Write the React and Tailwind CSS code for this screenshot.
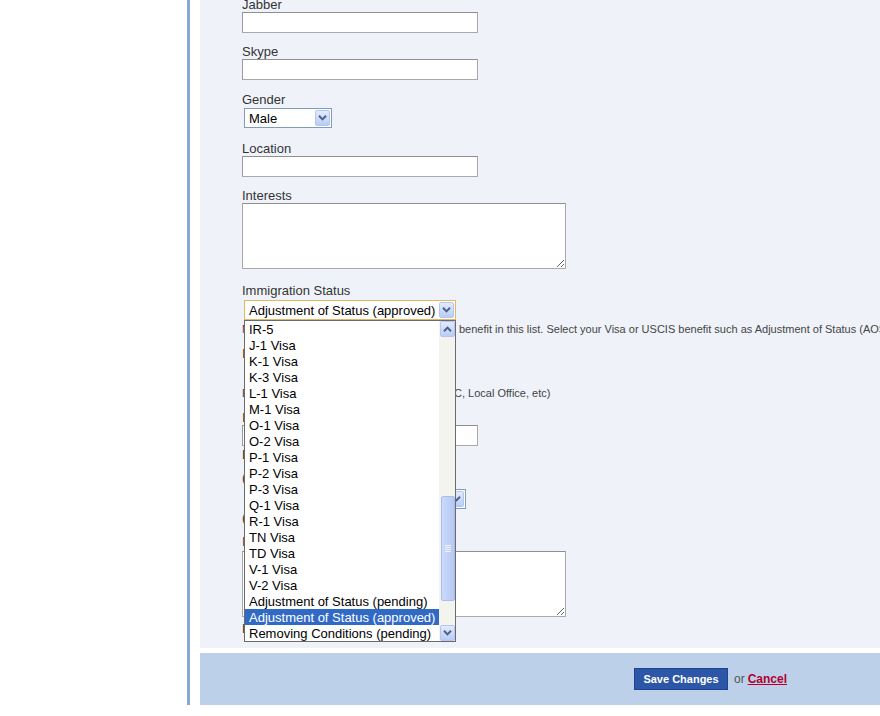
import React from "react";

const Chev = ({ up }) => (
  <svg width="9" height="6" viewBox="0 0 9 6">
    <path
      d={up ? "M1 5.2 L4.5 1.6 L8 5.2" : "M1 0.8 L4.5 4.4 L8 0.8"}
      fill="none"
      stroke="#4d6185"
      strokeWidth="2"
    />
  </svg>
);

const ArrowBtn = ({ up, h = "h-[16px]" }) => (
  <div
    className={`w-[15px] ${h} rounded-[2px] bg-gradient-to-b from-[#e2ebfe] to-[#b9ccf6] border border-[#b3c6f0] flex items-center justify-center shrink-0`}
  >
    <Chev up={up} />
  </div>
);

const Label = ({ children, className = "" }) => (
  <div className={`text-[13px] leading-[15px] text-[#333] whitespace-nowrap ${className}`}>{children}</div>
);

const TextInput = ({ className = "" }) => (
  <input
    type="text"
    readOnly
    className={`block w-[236px] h-[21px] bg-white border border-[#a9a9a9] border-t-[#8f8f8f] border-l-[#9a9a9a] outline-none ${className}`}
  />
);

const Area = ({ className = "" }) => (
  <textarea
    readOnly
    className={`block w-[324px] h-[66px] bg-white border border-[#a9a9a9] border-t-[#8f8f8f] outline-none ${className}`}
  />
);

const Select = ({ value, w, focus, className = "" }) => (
  <div
    className={`${w} h-[20px] bg-white border flex items-center justify-between pl-[4px] pr-[1px] ${
      focus ? "border-[#e3b860]" : "border-[#7f9db9]"
    } ${className}`}
  >
    <span className="text-[13px] leading-[16px] pt-[1px] text-black whitespace-nowrap">{value}</span>
    <ArrowBtn h="h-[16px]" />
  </div>
);

const options = [
  "IR-5",
  "J-1 Visa",
  "K-1 Visa",
  "K-3 Visa",
  "L-1 Visa",
  "M-1 Visa",
  "O-1 Visa",
  "O-2 Visa",
  "P-1 Visa",
  "P-2 Visa",
  "P-3 Visa",
  "Q-1 Visa",
  "R-1 Visa",
  "TN Visa",
  "TD Visa",
  "V-1 Visa",
  "V-2 Visa",
  "Adjustment of Status (pending)",
  "Adjustment of Status (approved)",
  "Removing Conditions (pending)",
];

export default function App() {
  return (
    <div
      className="w-[880px] h-[716px] bg-white flex overflow-hidden"
      style={{ fontFamily: '"Liberation Sans", Arial, sans-serif' }}
    >
      <div className="w-[187px] shrink-0" />
      <div className="w-[3px] h-[705px] bg-[#86a8d3] shrink-0" />
      <div className="w-[10px] shrink-0" />
      <div className="flex-1 flex flex-col">
        {/* form panel */}
        <div className="relative h-[648px] bg-[#eff3f9] pl-[42px] overflow-hidden">
          <Label className="mt-[-3px]">Jabber</Label>
          <TextInput />
          <Label className="mt-[11px]">Skype</Label>
          <TextInput />
          <Label className="mt-[12px]">Gender</Label>
          <Select value="Male" w="w-[88px]" className="mt-[1px] ml-[2px]" />
          <Label className="mt-[13px]">Location</Label>
          <TextInput />
          <Label className="mt-[11px]">Interests</Label>
          <Area />
          <Label className="mt-[14px]">Immigration Status</Label>
          <Select value="Adjustment of Status (approved)" w="w-[212px]" focus className="mt-[2px] ml-[2px]" />

          {/* content hidden beneath the open list */}
          <div className="mt-[3px] flex whitespace-nowrap text-[11px] leading-[13px] text-[#444]">
            <span className="w-[217px] overflow-hidden shrink-0">Note: If you cannot find your immigration</span>
            <span>benefit in this list. Select your Visa or USCIS benefit such as Adjustment of Status (AOS) and update it later.</span>
          </div>
          <Label className="mt-[10px]">Immigration Date</Label>
          <Select value="" w="w-[150px]" className="mt-[1px] ml-[2px]" />
          <div className="mt-[5px] flex whitespace-nowrap text-[11px] leading-[13px] text-[#444]">
            <span className="w-[212px] overflow-hidden shrink-0">Enter your processing center (NSC, VSC, TSC, NB</span>
            <span>C, Local Office, etc)</span>
          </div>
          <Label className="mt-[10px]">Immigration Office</Label>
          <TextInput />
          <Label className="mt-[1px]">Last Updated</Label>
          <Label className="mt-[8px]">(Country of Birth)</Label>
          <Select value="" w="w-[222px]" className="mt-[4px] ml-[2px]" />
          <Label className="mt-[1px]">(Citizenship)</Label>
          <Label className="mt-[9px]">Immigration Notes</Label>
          <Area className="mt-[2px]" />
          <Label className="mt-[4px]">Last Action</Label>

          {/* open dropdown list */}
          <div className="absolute left-[44px] top-[320px] w-[212px] h-[322px] bg-white border border-[#6b6b6b] flex">
            <div className="w-[194px] flex flex-col">
              {options.map((o) => {
                const sel = o === "Adjustment of Status (approved)";
                return (
                  <div
                    key={o}
                    className={`h-[16px] pl-[4px] pt-[1px] text-[13px] leading-[15px] whitespace-nowrap ${
                      sel ? "bg-[#316ac5] text-white" : "text-black"
                    }`}
                  >
                    {o}
                  </div>
                );
              })}
            </div>
            <div className="w-[16px] bg-[#f4f4ef] flex flex-col items-end">
              <ArrowBtn up />
              <div className="h-[159px]" />
              <div className="w-[14px] h-[105px] rounded-[2px] bg-gradient-to-r from-[#cbdafc] to-[#b6c9f4] border border-[#a9bdee] flex flex-col items-center justify-center gap-[1px]">
                <div className="w-[6px] h-[1px] bg-[#eef3ff]" />
                <div className="w-[6px] h-[1px] bg-[#eef3ff]" />
                <div className="w-[6px] h-[1px] bg-[#eef3ff]" />
                <div className="w-[6px] h-[1px] bg-[#eef3ff]" />
              </div>
              <div className="flex-1" />
              <ArrowBtn />
            </div>
          </div>
        </div>
        <div className="h-[5px]" />
        {/* footer */}
        <div className="h-[52px] bg-[#bdd0ea] flex items-center pl-[434px]">
          <div className="h-[22px] w-[94px] bg-[#2c56a7] border border-[#1f428a] flex items-center justify-center text-white text-[11px] font-bold whitespace-nowrap">
            Save Changes
          </div>
          <span className="ml-[6px] text-[12px] text-[#555]">or</span>
          <span className="ml-[3px] text-[12px] font-bold text-[#b3002a] underline">Cancel</span>
        </div>
      </div>
    </div>
  );
}
